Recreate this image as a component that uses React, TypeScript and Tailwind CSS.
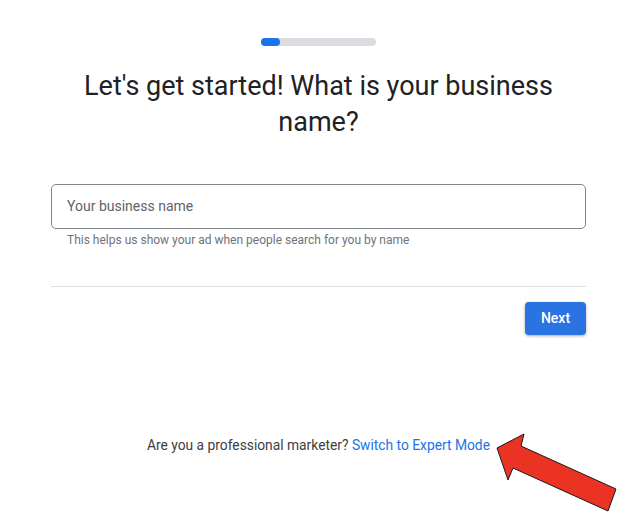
import React from "react";

const App: React.FC = () => {
  return (
    <div className="relative h-[520px] w-[643px] overflow-hidden bg-white" style={{ fontFamily: "Roboto, 'Liberation Sans', sans-serif" }}>
      <div className="ml-[51px] flex w-[535px] flex-col">
        <div className="mt-[38px] flex justify-center">
          <div className="h-[8px] w-[115px] rounded-full bg-[#dadce0]">
            <div className="h-[8px] w-[19px] rounded-full bg-[#1a73e8]" />
          </div>
        </div>

        <h1 className="mt-[22px] text-center text-[27px] leading-[36px] font-normal text-[#202124]">
          Let's get started! What is your business
          <br />
          name?
        </h1>

        <div className="mt-[44px] flex h-[45px] items-center rounded-[5px] border border-[#80868b] px-[15px]">
          <span className="text-[14px] text-[#5f6368]">Your business name</span>
        </div>
        <p className="mt-[3px] pl-[16px] text-[12px] leading-[16px] text-[#6f7378]">This helps us show your ad when people search for you by name</p>

        <div className="mt-[38px] h-px bg-[#e0e0e0]" />

        <div className="mt-[15px] flex justify-end">
          <button className="h-[33px] w-[61px] rounded-[4px] bg-[#2a73e2] text-[14px] font-medium text-white shadow-[0_1px_3px_rgba(60,64,67,0.45)]">
            Next
          </button>
        </div>

        <p className="mt-[100px] text-center text-[13.8px] leading-[20px] text-[#3c4043]">
          Are you a professional marketer? <span className="text-[#1a73e8]">Switch to Expert Mode</span>
        </p>
      </div>

      <svg className="absolute left-0 top-0" width="643" height="520" viewBox="0 0 643 520">
        <polygon
          points="497,448 524,434 521,446 616,489 608,511 513,468 508,480"
          fill="#ea3323"
          stroke="#1a1a1a"
          strokeWidth="1"
          strokeLinejoin="miter"
        />
      </svg>
    </div>
  );
};

export default App;
